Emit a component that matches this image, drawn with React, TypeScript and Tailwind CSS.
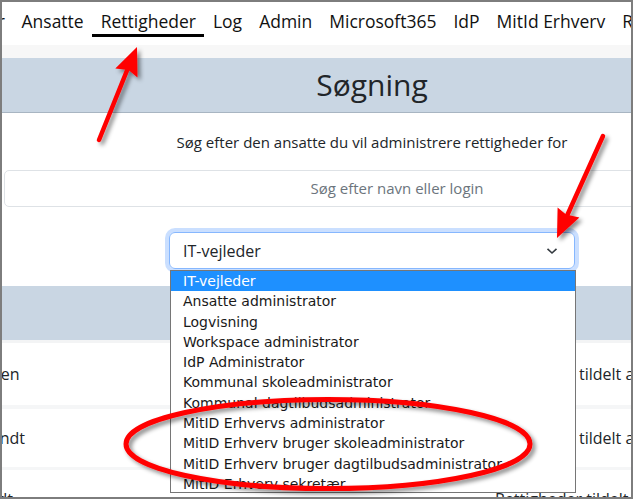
import React from "react";

const sans = { fontFamily: '"Open Sans", "Noto Sans", sans-serif' };
const list = { fontFamily: '"DejaVu Sans", Verdana, sans-serif' };

const navItems = ["Ansatte", "Rettigheder", "Log", "Admin", "Microsoft365", "IdP", "MitId Erhverv", "Rapporter"];
const options = [
  "IT-vejleder",
  "Ansatte administrator",
  "Logvisning",
  "Workspace administrator",
  "IdP Administrator",
  "Kommunal skoleadministrator",
  "Kommunal dagtilbudsadministrator",
  "MitID Erhvervs administrator",
  "MitID Erhverv bruger skoleadministrator",
  "MitID Erhverv bruger dagtilbudsadministrator",
  "MitID Erhverv sekretær",
];

function Annotations() {
  return (
    <svg className="absolute left-[-2px] top-[-2px] pointer-events-none" width="633" height="499" viewBox="0 0 633 499">
      <defs>
        <filter id="sh" x="-20%" y="-20%" width="140%" height="140%">
          <feDropShadow dx="3" dy="3" stdDeviation="2" floodColor="#000" floodOpacity="0.45" />
        </filter>
      </defs>
      <g filter="url(#sh)" fill="#ff0000" stroke="none">
        <line x1="99" y1="140" x2="128" y2="68" stroke="#ff0000" strokeWidth="4.5" strokeLinecap="round" />
        <polygon points="137,47 137.5,77.4 128.5,70 115.3,68.4" />
        <line x1="603" y1="136" x2="566" y2="218" stroke="#ff0000" strokeWidth="4.5" strokeLinecap="round" />
        <polygon points="557,238 557.6,207.6 566,214.5 579.4,217.4" />
        <ellipse cx="328" cy="444" rx="202" ry="44.5" fill="none" stroke="#ff0000" strokeWidth="5" />
      </g>
    </svg>
  );
}

export default function App() {
  return (
    <div className="relative w-[633px] h-[499px] overflow-hidden border-2 border-[#7d7d7d] bg-white box-border text-[#212529]" style={sans}>
      {/* nav */}
      <div className="h-[43px] flex items-start whitespace-nowrap">
        <div className="w-[11px] shrink-0 overflow-hidden flex justify-end">
          <span className="pt-[7px] pr-[8px] text-[17.5px] leading-[24px] text-[#111]">Bruger</span>
        </div>
        {navItems.map((n) => (
          <div
            key={n}
            className={`shrink-0 px-[8.5px] pt-[7px] pb-[1px] text-[17.5px] leading-[24px] text-[#111] border-b-[3px] ${
              n === "Rettigheder" ? "border-black" : "border-transparent"
            }`}
          >
            {n}
          </div>
        ))}
      </div>
      <div className="h-[13px] bg-[#f7f7f7]" />
      {/* title band */}
      <div className="h-[55px] bg-[#c9d6e3] border-b border-[#a8b5c2]">
        <div className="w-[740px] h-full flex items-center justify-center text-[30px] leading-[40px] text-[#212529]">
          Søgning
        </div>
      </div>
      {/* search area */}
      <div className="w-[740px] mt-[19px] text-center text-[15px] leading-[20px] text-[#212529] whitespace-nowrap">
        Søg efter den ansatte du vil administrere rettigheder for
      </div>
      <div className="ml-[2px] mt-[18px] w-[786px] h-[37px] border border-[#dee2e6] rounded-[5px] flex items-center justify-center text-[15px] text-[#6c757d] whitespace-nowrap">
        Søg efter navn eller login
      </div>
      <div className="w-[740px] mt-[25px] flex justify-center">
        <div className="w-[406px] h-[37px] border border-[#86b7fe] rounded-[6px] shadow-[0_0_0_4px_rgba(13,110,253,0.22)] flex items-center justify-between pl-[13px] pr-[16px] text-[16px] text-[#212529]">
          <span>IT-vejleder</span>
          <svg width="12" height="8" viewBox="0 0 12 8">
            <path d="M1.5 1.8 L6 6 L10.5 1.8" fill="none" stroke="#343a40" strokeWidth="1.6" />
          </svg>
        </div>
      </div>
      {/* table */}
      <div className="mt-[17px] h-[54px] bg-[#c9d6e3]" />
      <div className="h-[3px] bg-[#f3f4f5]" />
      <div className="h-[62px] grid grid-cols-[577px_1fr] items-center text-[16px] whitespace-nowrap">
        <span className="ml-[-32px]">Jensen</span>
        <span className="overflow-hidden">tildelt af</span>
      </div>
      <div className="h-[4px] bg-[#f5f6f7]" />
      <div className="h-[58px] grid grid-cols-[577px_1fr] items-center text-[16px] whitespace-nowrap">
        <span className="ml-[-28px]">Brandt</span>
        <span className="overflow-hidden">tildelt af</span>
      </div>
      <div className="h-[3px] bg-[#f5f6f7]" />
      <div className="h-[40px] grid grid-cols-[493px_1fr] items-start text-[16px] leading-[24px] whitespace-nowrap pt-[17px]">
        <span className="ml-[-30px]">Holdt</span>
        <span className="overflow-hidden">Rettigheder tildelt af</span>
      </div>

      {/* dropdown list */}
      <div className="absolute left-[168px] top-[268px] w-[406px] h-[223px] border border-[#767676] bg-white overflow-hidden" style={list}>
        {options.map((o, i) => (
          <div
            key={o}
            className={`h-[20.3px] pl-[12px] text-[14px] leading-[20px] whitespace-nowrap ${
              i === 0 ? "bg-[#1e90ff] text-white" : "text-[#1a1a1a]"
            }`}
          >
            {o}
          </div>
        ))}
      </div>
      <Annotations />
    </div>
  );
}
